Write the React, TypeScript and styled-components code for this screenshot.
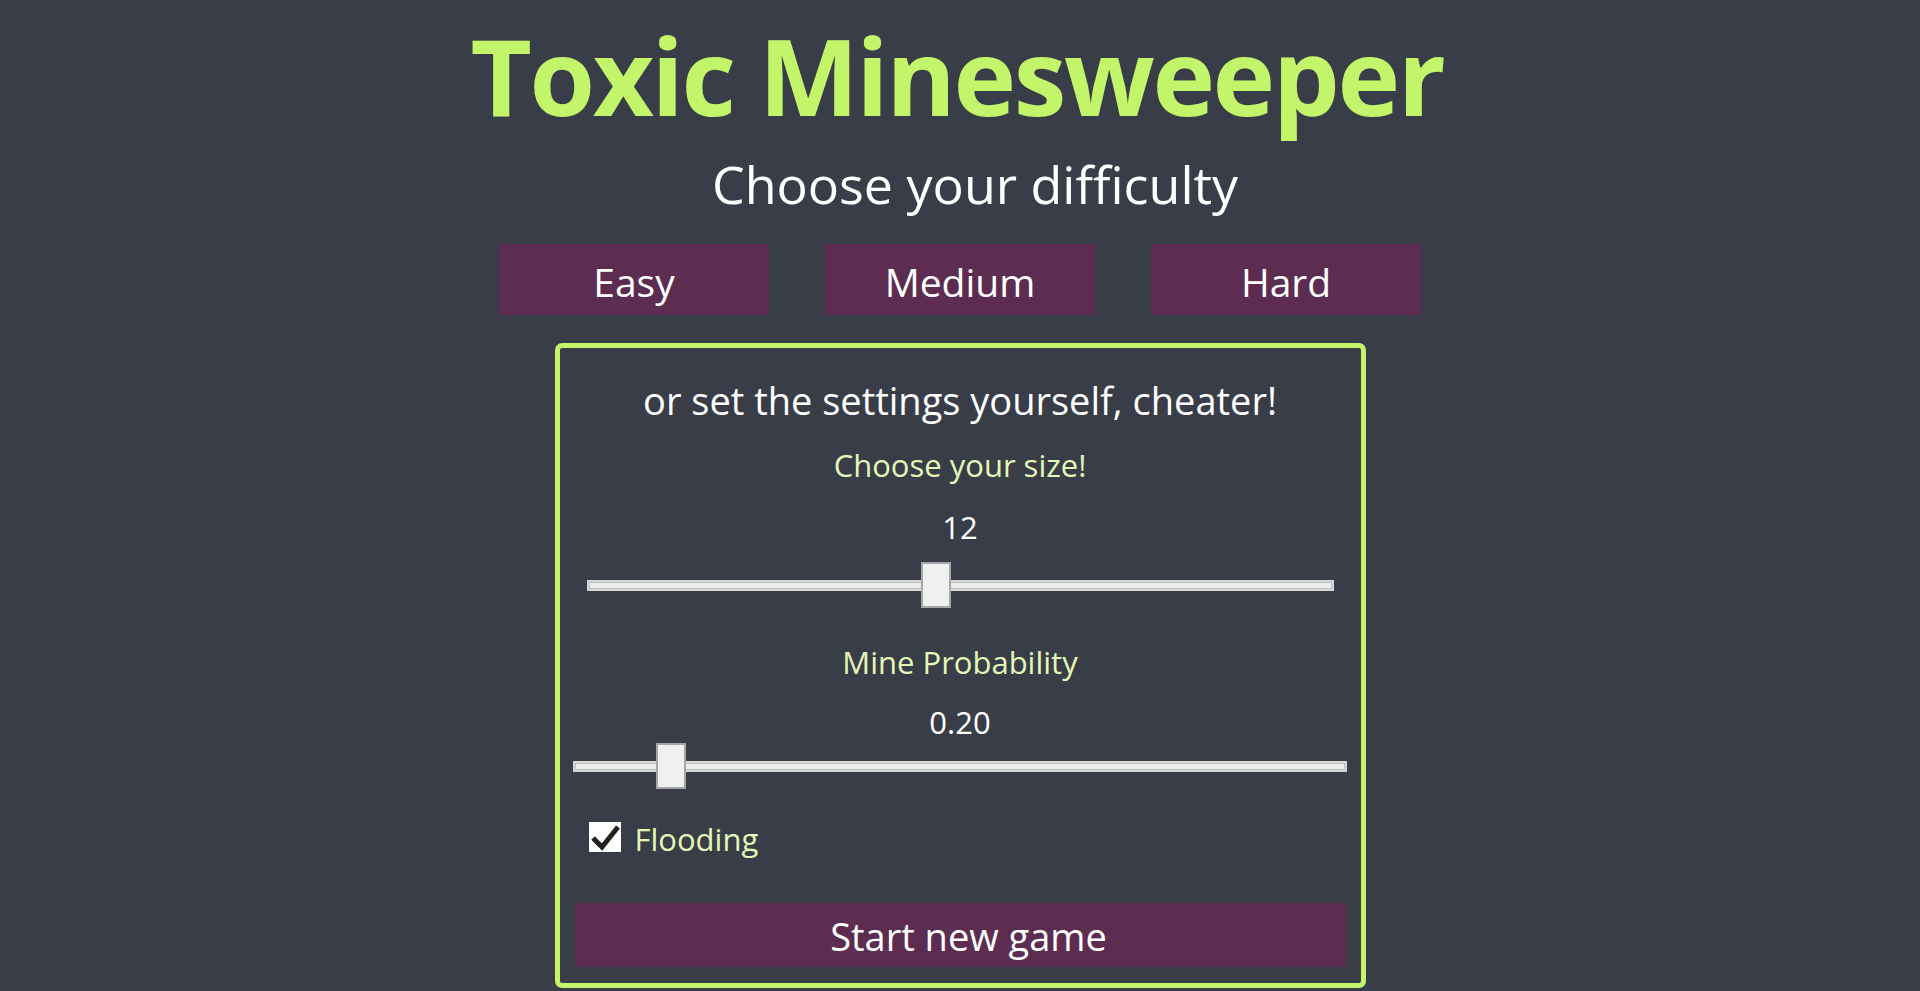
import { useState } from 'react'
import styled, { createGlobalStyle } from 'styled-components'

const GlobalStyle = createGlobalStyle`
  html, body {
    margin: 0;
    padding: 0;
    background-color: #393d47;
    font-family: 'Open Sans', 'Noto Sans', sans-serif;
  }
`

const Page = styled.main`
  display: flex;
  flex-direction: column;
  align-items: center;
  min-height: 100vh;
`

const Title = styled.h1`
  margin: 22px 0 0;
  padding-right: 6px;
  font-size: 106px;
  line-height: 106px;
  font-weight: 700;
  letter-spacing: -2.4px;
  color: #c3f56b;
`

const Subtitle = styled.h2`
  margin: 25px 0 0;
  padding-left: 30px;
  font-size: 52px;
  line-height: 62px;
  font-weight: 400;
  color: #ffffff;
`

const DifficultyRow = styled.div`
  display: flex;
  gap: 56px;
  margin-top: 29px;
`

const PurpleButton = styled.button`
  display: flex;
  align-items: center;
  justify-content: center;
  border: none;
  padding: 0;
  background-color: #5c2d50;
  color: #ffffff;
  font-family: inherit;
  font-size: 39px;
  cursor: pointer;
`

const DifficultyButton = styled(PurpleButton)`
  width: 270px;
  height: 71px;
  padding-top: 4px;
`

const SettingsBox = styled.section`
  box-sizing: border-box;
  display: flex;
  flex-direction: column;
  align-items: center;
  width: 811px;
  margin-top: 28px;
  padding: 0 15px 16px;
  border: 5px solid #c3f56b;
  border-radius: 7px;
`

const BoxHeading = styled.p`
  margin: 27px 0 0;
  font-size: 38px;
  line-height: 50px;
  color: #ffffff;
`

const Text = styled.p<{ $mt: number; $pale?: boolean }>`
  margin: ${p => p.$mt}px 0 0;
  font-size: 31px;
  line-height: 40px;
  color: ${p => (p.$pale ? '#e3f8b8' : '#ffffff')};
`

const Slider = styled.input.attrs({ type: 'range' })<{ $width: number; $mt: number }>`
  -webkit-appearance: none;
  appearance: none;
  width: ${p => p.$width}px;
  height: 46px;
  margin: ${p => p.$mt}px 0 0;
  background: transparent;
  cursor: pointer;

  &::-webkit-slider-runnable-track {
    height: 11px;
    background: #ececec;
    box-shadow: inset 0 0 0 2px #d6d6d6, inset 0 0 0 3px #c0c0c0;
  }

  &::-webkit-slider-thumb {
    -webkit-appearance: none;
    box-sizing: border-box;
    width: 30px;
    height: 46px;
    margin-top: -17.5px;
    background: #f0f0f0;
    border: 2px solid #a6a6a6;
  }
`

const CheckRow = styled.label`
  display: flex;
  align-items: center;
  gap: 14px;
  align-self: stretch;
  height: 30px;
  margin-top: 33px;
  padding-left: 14px;
  color: #e3f8b8;
  font-size: 31px;
  line-height: 30px;
  cursor: pointer;
`

const CheckLabel = styled.span`
  padding-top: 4px;
`

const HiddenInput = styled.input`
  display: none;
`

const CheckBox = styled.span`
  display: flex;
  width: 32px;
  height: 30px;
  background: #ffffff;
`

const StartButton = styled(PurpleButton)`
  width: 100%;
  height: 64px;
  margin-top: 51px;
  padding: 2px 0 0 17px;
  font-size: 38px;
`

function App() {
  const [size, setSize] = useState(12)
  const [prob, setProb] = useState(0.2)
  const [flooding, setFlooding] = useState(true)

  return (
    <Page>
      <GlobalStyle />
      <Title>Toxic Minesweeper</Title>
      <Subtitle>Choose your difficulty</Subtitle>
      <DifficultyRow>
        <DifficultyButton>Easy</DifficultyButton>
        <DifficultyButton>Medium</DifficultyButton>
        <DifficultyButton>Hard</DifficultyButton>
      </DifficultyRow>
      <SettingsBox>
        <BoxHeading>or set the settings yourself, cheater!</BoxHeading>
        <Text $mt={20} $pale>Choose your size!</Text>
        <Text $mt={22}>{size}</Text>
        <Slider
          $width={747}
          $mt={15}
          min={5}
          max={20}
          step={1}
          value={size}
          onChange={e => setSize(Number(e.target.value))}
        />
        <Text $mt={34} $pale>Mine Probability</Text>
        <Text $mt={20}>{prob.toFixed(2)}</Text>
        <Slider
          $width={774}
          $mt={1}
          min={0.1}
          max={1}
          step={0.01}
          value={prob}
          onChange={e => setProb(Number(e.target.value))}
        />
        <CheckRow>
          <HiddenInput
            type='checkbox'
            checked={flooding}
            onChange={e => setFlooding(e.target.checked)}
          />
          <CheckBox>
            {flooding && (
              <svg width='32' height='30' viewBox='0 0 32 30'>
                <polyline points='4,16 13,25 29,5' fill='none' stroke='#222222' strokeWidth='5' />
              </svg>
            )}
          </CheckBox>
          <CheckLabel>Flooding</CheckLabel>
        </CheckRow>
        <StartButton>Start new game</StartButton>
      </SettingsBox>
    </Page>
  )
}

export default App
